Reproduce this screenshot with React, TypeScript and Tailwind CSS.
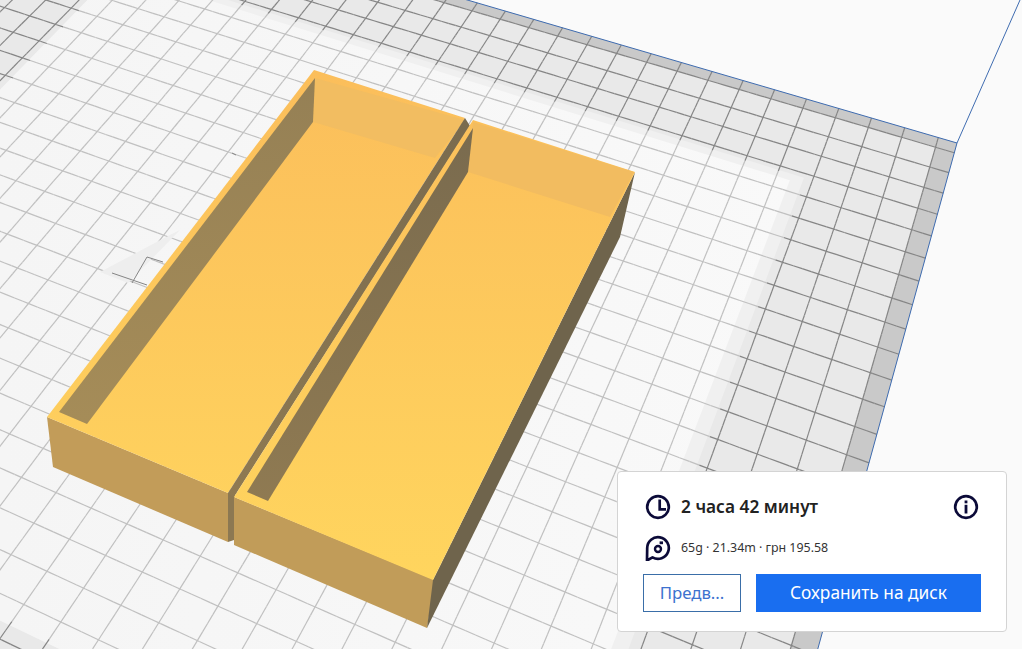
const A = 0.0068;
const B = -0.01344;
const VPU = [-4059, -1322];
const VPV = [1354, -1300];
const ORIGIN = [957, 143];

// bed coordinates (in grid cells from the far right corner) to screen pixels
function bed(u: number, v: number) {
  const t = u * A;
  const s = v * B;
  const d = 1 + t + s;
  return [
    (ORIGIN[0] + t * VPU[0] + s * VPV[0]) / d,
    (ORIGIN[1] + t * VPU[1] + s * VPV[1]) / d,
  ];
}

function poly(points: number[][]) {
  return points.map((p) => `${p[0].toFixed(1)},${p[1].toFixed(1)}`).join(' ');
}

function quad(u0: number, v0: number, u1: number, v1: number) {
  return poly([bed(u0, v0), bed(u1, v0), bed(u1, v1), bed(u0, v1)]);
}

const U_MAX = 34;
const V_MAX = 34;
const IN_U0 = 3.8;
const IN_U1 = 27.3;
const IN_V0 = 3.7;
const IN_V1 = 27.1;

const uLines = Array.from({ length: U_MAX }, (_, k) => 0.55 + k);
const vLines = Array.from({ length: V_MAX }, (_, k) => 0.5 + k);

function isInner(u: number, v: number) {
  return u >= IN_U0 && u <= IN_U1 && v >= IN_V0 && v <= IN_V1;
}

function BedGrid() {
  const segs: { a: number[]; b: number[]; inner: boolean }[] = [];
  uLines.forEach((u) => {
    for (let v = 0; v < V_MAX; v += 0.25) {
      segs.push({ a: bed(u, v), b: bed(u, v + 0.25), inner: isInner(u, v + 0.125) });
    }
  });
  vLines.forEach((v) => {
    for (let u = 0; u < U_MAX; u += 0.25) {
      segs.push({ a: bed(u, v), b: bed(u + 0.25, v), inner: isInner(u + 0.125, v) });
    }
  });
  return (
    <g>
      <defs>
        <linearGradient id="bedInner" gradientUnits="userSpaceOnUse" x1="0" y1="0" x2="1000" y2="0">
          <stop offset="0" stopColor="#f5f5f5" />
          <stop offset="1" stopColor="#fafafa" />
        </linearGradient>
      </defs>
      <polygon points={quad(0, 0, U_MAX, V_MAX)} fill="#e9e9e9" />
      <polygon points={quad(IN_U0, IN_V0, IN_U1, IN_V1)} fill="#f0f0f0" />
      <polygon points={quad(IN_U0 + 0.35, IN_V0 + 0.3, IN_U1, IN_V1)} fill="url(#bedInner)" />
      <polygon points={quad(0, 0, U_MAX, 0.5)} fill="#c9c9c9" />
      <polygon points={quad(0, 0, 0.55, V_MAX)} fill="#c9c9c9" />
      {segs.map((s, i) => (
        <line
          key={i}
          x1={s.a[0]}
          y1={s.a[1]}
          x2={s.b[0]}
          y2={s.b[1]}
          stroke={s.inner ? '#c0c0c0' : '#858585'}
          strokeWidth="1.2"
        />
      ))}
      {/* build volume outline */}
      <polyline
        points={poly([bed(U_MAX, 0), bed(0, 0), bed(0, V_MAX)])}
        fill="none"
        stroke="#3f6cb0"
        strokeWidth="1"
      />
      <line x1="957" y1="143" x2="1020" y2="0" stroke="#3f6cb0" strokeWidth="1" />
      {/* stray shadow by the left tray */}
      <polygon points="100,272 128,283 180,230 170,235" fill="#eeeeee" />
      <path d="M112 273 L147 285 M132 283 L147 257 L163 262 M232 153 L236 155" stroke="#858585" strokeWidth="1" fill="none" />
    </g>
  );
}

function Trays() {
  return (
    <g>
      <defs>
        <linearGradient id="floor" gradientUnits="userSpaceOnUse" x1="0" y1="70" x2="0" y2="580">
          <stop offset="0" stopColor="#fbbe5b" />
          <stop offset="1" stopColor="#ffd55e" />
        </linearGradient>
        <linearGradient id="wallIn" gradientUnits="userSpaceOnUse" x1="0" y1="80" x2="0" y2="500">
          <stop offset="0" stopColor="#77694e" />
          <stop offset="1" stopColor="#8f7a52" />
        </linearGradient>
        <linearGradient id="wallLeft" gradientUnits="userSpaceOnUse" x1="0" y1="80" x2="0" y2="420">
          <stop offset="0" stopColor="#958055" />
          <stop offset="1" stopColor="#a58c58" />
        </linearGradient>
      </defs>

      {/* left tray */}
      <polygon points="47,417 228,493 228,542 53,467" fill="#c29c59" />
      <polygon points="228,493 235,489 234,540 228,542" fill="#8c7852" />
      <polygon points="314,70 465,118 228,493 47,417" fill="url(#floor)" />
      <polygon points="315,78 465,120 435,158 313,122" fill="#f2bd61" />
      <polygon points="315,78 313,122 87,424 59,412" fill="url(#wallLeft)" />
      <polygon points="465,118 470,126 234,497 228,493" fill="url(#wallIn)" />

      {/* right tray */}
      <polygon points="234,497 435,580 427,628 234,545" fill="#c19c59" />
      <polygon points="635,172 620,237 427,628 433,580" fill="#6f644c" />
      <polygon points="473,120 635,172 433,580 234,497" fill="url(#floor)" />
      <polygon points="473,122 634,172 610,217 468,172" fill="#f2bc60" />
      <polygon points="473,128 468,172 268,501 247,492" fill="url(#wallIn)" />
    </g>
  );
}

const NAVY = '#0b0a38';

function ClockIcon() {
  return (
    <svg width="26" height="26" viewBox="0 0 26 26" fill="none">
      <circle cx="13" cy="13" r="10.8" stroke={NAVY} strokeWidth="2.7" />
      <path d="M14.7 5.5 V15.3 H21" stroke={NAVY} strokeWidth="2.7" />
    </svg>
  );
}

function InfoIcon() {
  return (
    <svg width="26" height="26" viewBox="0 0 26 26" fill="none">
      <circle cx="13" cy="13" r="10.8" stroke={NAVY} strokeWidth="2.7" />
      <rect x="11.6" y="6.5" width="2.8" height="2.8" fill={NAVY} />
      <rect x="11.6" y="10.8" width="2.8" height="8.7" fill={NAVY} />
    </svg>
  );
}

function SpoolIcon() {
  return (
    <svg width="26" height="26" viewBox="0 0 26 26" fill="none">
      <path
        d="M2.2 13 A10.8 10.8 0 1 1 7.5 22.3 L2 25.5 Z"
        stroke={NAVY}
        strokeWidth="2.7"
        strokeLinejoin="round"
      />
      <circle cx="13" cy="14" r="3" stroke={NAVY} strokeWidth="2.4" />
      <rect x="14.6" y="6.4" width="3.4" height="2.8" fill={NAVY} />
    </svg>
  );
}

export default function App() {
  return (
    <div className="relative h-[649px] w-[1022px] overflow-hidden bg-[#fafafa] font-['Noto_Sans',sans-serif]">
      <svg width="1022" height="649" viewBox="0 0 1022 649" className="block">
        <BedGrid />
        <Trays />
      </svg>

      <div className="absolute right-[15px] bottom-[17px] flex h-[161px] w-[390px] flex-col rounded-[4px] border border-[#d4d4d4] bg-white pt-[22px] pr-[25px] pl-[25px]">
        <div className="flex h-[26px] items-center pr-[2px] pl-[2px]">
          <ClockIcon />
          <span className="ml-[10px] flex-1 text-[17.3px] leading-[26px] font-semibold text-[#222222]">2 часа 42 минут</span>
          <InfoIcon />
        </div>
        <div className="mt-[15px] flex h-[26px] items-center pl-[2px]">
          <SpoolIcon />
          <span className="ml-[10px] text-[12.4px] leading-[26px] text-[#333333]">65g · 21.34m · грн 195.58</span>
        </div>
        <div className="mt-[13px] flex h-[38px] gap-[15px]">
          <button className="h-[38px] w-[98px] border border-[#3a6ea8] bg-white text-[16.8px] text-[#3d72cf]">Предв...</button>
          <button className="h-[38px] w-[225px] bg-[#196ef0] text-[17.3px] text-white">Сохранить на диск</button>
        </div>
      </div>
    </div>
  );
}
